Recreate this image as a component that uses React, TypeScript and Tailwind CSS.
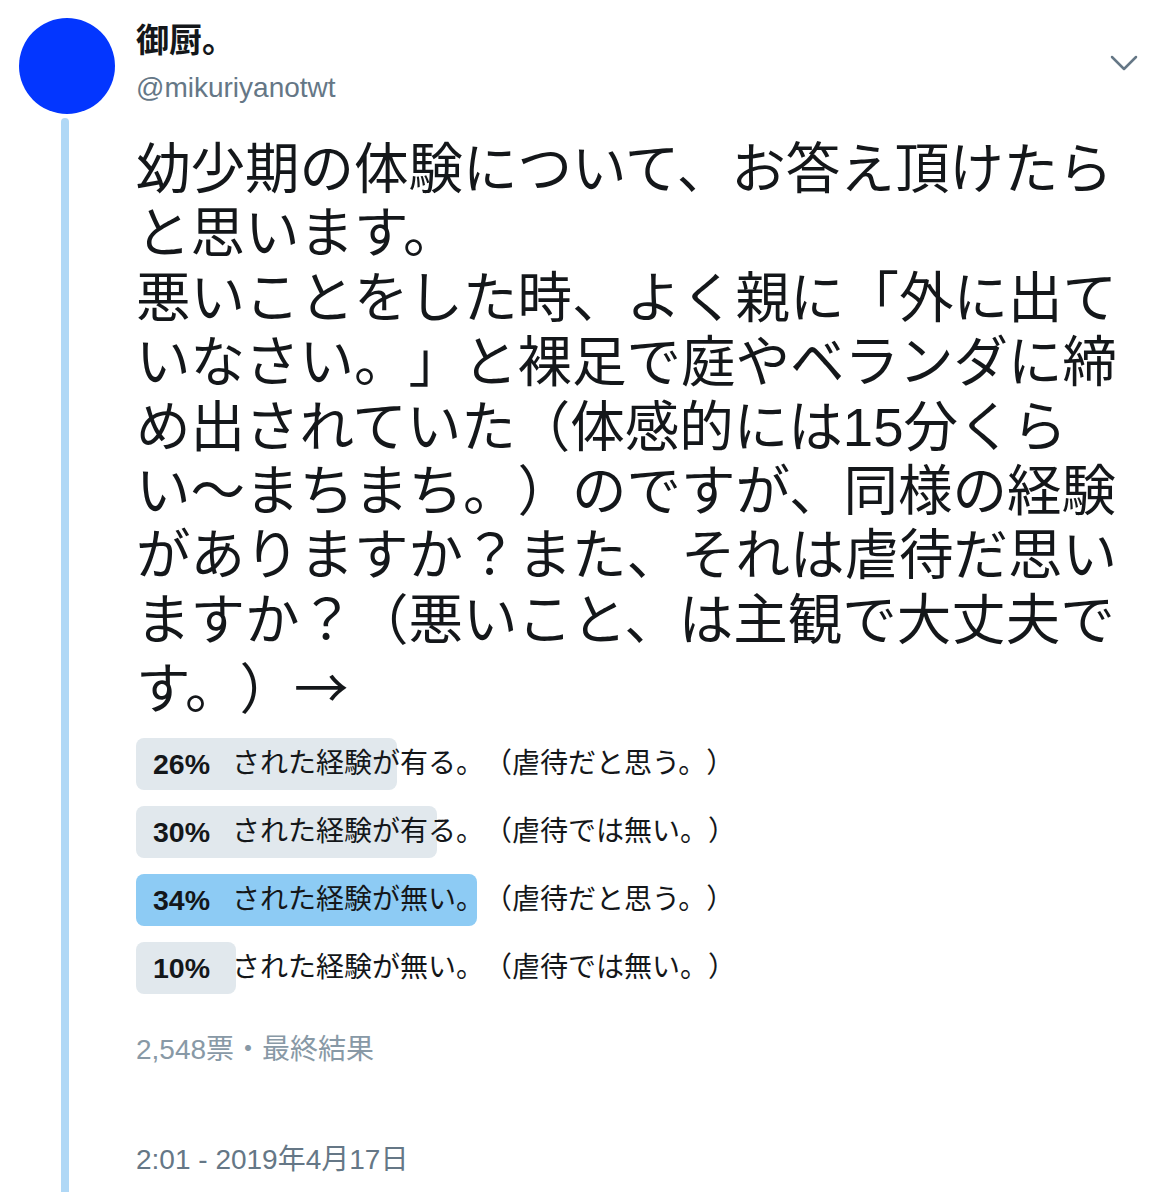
import React from 'react';

const font = { fontFamily: '"Liberation Sans", "Noto Sans CJK JP", sans-serif' };
const cjk = { fontFamily: '"Noto Sans CJK JP", sans-serif' };

const lines = [
  '幼少期の体験について、お答え頂けたら',
  'と思います。',
  '悪いことをした時、よく親に「外に出て',
  'いなさい。」と裸足で庭やベランダに締',
  'め出されていた（体感的には15分くら',
  'い〜まちまち。）のですが、同様の経験',
  'がありますか？また、それは虐待だ思い',
  'ますか？（悪いこと、は主観で大丈夫で',
];

const choices = [
  { pct: 26, label: 'された経験が有る。（虐待だと思う。）', top: false },
  { pct: 30, label: 'された経験が有る。（虐待では無い。）', top: false },
  { pct: 34, label: 'された経験が無い。（虐待だと思う。）', top: true },
  { pct: 10, label: 'された経験が無い。（虐待では無い。）', top: false },
];

const PollRow = ({ pct, label, top }: { pct: number; label: string; top: boolean }) => (
  <div className="relative h-[52px] w-[1004px]">
    <div
      className={top ? 'absolute inset-y-0 left-0 rounded-lg bg-[#8dcbf4]' : 'absolute inset-y-0 left-0 rounded-lg bg-[#e1e8ed]'}
      style={{ width: `${pct}%` }}
    />
    <div className="relative flex h-full items-center pl-[17px] text-[#14171a]">
      <span className="w-[79px] text-[28.5px] font-bold leading-[36px]">{pct}%</span>
      <span className="whitespace-nowrap text-[28px] leading-[36px]">{label}</span>
    </div>
  </div>
);

export default function App() {
  return (
    <div className="relative flex h-[1192px] w-[1174px] overflow-hidden bg-white [text-spacing-trim:space-all]" style={font}>
      <div className="flex w-[136px] shrink-0 flex-col pl-[19px] pt-[18px]">
        <div className="h-[96px] w-[96px] rounded-full bg-[#0336ff]" />
        <div className="ml-[42px] mt-1 w-2 flex-1 rounded-t-full bg-[#b0d8f6]" />
      </div>

      <div className="flex flex-col pt-[21px]">
        <div className="text-[33px] font-bold leading-[40px] text-[#14171a]">御厨。</div>
        <div className="mt-[9px] text-[28px] leading-[36px] text-[#657786]">@mikuriyanotwt</div>

        <div className="mt-[32px] text-[54.5px] leading-[64.4px] text-[#14171a]">
          {lines.map((l) => (
            <div key={l} className="h-[64.4px] whitespace-nowrap">{l}</div>
          ))}
          <div className="h-[64.4px] whitespace-nowrap">
            す。）<span style={cjk}>→</span>
          </div>
        </div>

        <div className="mt-[20px] flex flex-col gap-4">
          {choices.map((c) => (
            <PollRow key={c.pct} {...c} />
          ))}
        </div>

        <div className="mt-[38px] text-[28px] leading-[36px] text-[#8899a6]">2,548票・最終結果</div>
        <div className="mt-[74px] text-[28px] leading-[36px] text-[#657786]">2:01 - 2019年4月17日</div>
      </div>

      <svg className="absolute left-[1106px] top-[48px]" width="36" height="30" viewBox="0 0 36 30" fill="none">
        <path d="M6 9 L18 21 L30 9" stroke="#657786" strokeWidth="2.5" strokeLinecap="round" strokeLinejoin="round" />
      </svg>
    </div>
  );
}
